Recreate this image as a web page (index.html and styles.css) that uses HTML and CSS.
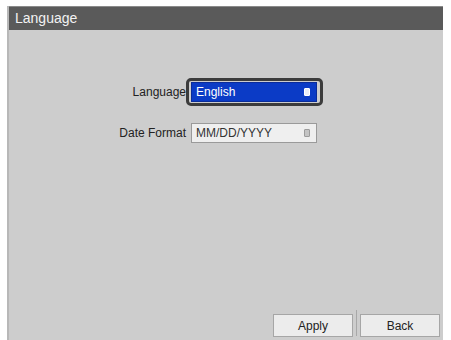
FILE: index.html
```html
<!DOCTYPE html>
<html lang="en">
<head>
    <meta charset="UTF-8">
    <title>Language</title>
    <link rel="stylesheet" href="styles.css">
</head>
<body>
    <div class="panel">
        <div class="title">Language</div>
        <div class="form">
            <div class="label">Language</div>
            <div class="ring">
                <div class="select active">
                    <span>English</span>
                    <span class="arrow"></span>
                </div>
            </div>
            <div class="label">Date Format</div>
            <div class="select">
                <span>MM/DD/YYYY</span>
                <span class="arrow"></span>
            </div>
        </div>
        <div class="foot">
            <button class="btn">Apply</button>
            <span class="sep"></span>
            <button class="btn">Back</button>
        </div>
    </div>
</body>
</html>
```

FILE: styles.css
```css
*{
    padding:0;
    margin:0;
    box-sizing:border-box;
}
body{
    background:#fff;
    font-family:"Liberation Sans",Arial,sans-serif;
    font-size:12px;
    color:#222;
}
.panel{
    margin:6px 0 0 7px;
    width:436px;
    height:334px;
    background:#cdcdcd;
    border-left:2px solid #b8b8b8;
    display:flex;
    flex-direction:column;
}
.title{
    height:24px;
    background:#5a5a5a;
    border-top:1px solid #8a8a8a;
    color:#f2f2f2;
    font-size:14px;
    line-height:22px;
    padding-left:6px;
}
.form{
    flex:1;
    display:grid;
    grid-template-columns:177px 126px;
    grid-auto-rows:20px;
    row-gap:21px;
    column-gap:5px;
    align-items:center;
    align-content:start;
    padding-top:52px;
}
.label{
    text-align:right;
}
.ring{
    position:relative;
    height:20px;
}
.ring::before{
    content:'';
    position:absolute;
    left:-5px;
    right:-6px;
    top:-4px;
    bottom:-4px;
    border:3px solid #3c3c3c;
    border-radius:5px;
}
.select{
    height:20px;
    background:#efefef;
    border:1px solid #9a9a9a;
    display:flex;
    align-items:center;
    justify-content:space-between;
    padding:0 6px 0 4px;
    color:#333;
}
.select .arrow{
    width:6px;
    height:8px;
    border:1px solid #9c9c9c;
    border-radius:1px;
    background:#c4c4c4;
}
.select.active{
    background:#0b3bc6;
    border-color:#0a2c99;
    color:#fff;
}
.select.active .arrow{
    background:#e8ecf8;
    border-color:#fff;
}
.foot{
    height:30px;
    display:flex;
    justify-content:flex-end;
    align-items:flex-start;
    padding:4px 3px 0 0;
}
.btn{
    width:80px;
    height:23px;
    background:#ececec;
    border:1px solid #a6a6a6;
    font-family:"Liberation Sans",Arial,sans-serif;
    font-size:12px;
    color:#222;
}
.sep{
    width:1px;
    height:26px;
    margin:-4px 3px 0;
    background:#a8a8a8;
}
```
